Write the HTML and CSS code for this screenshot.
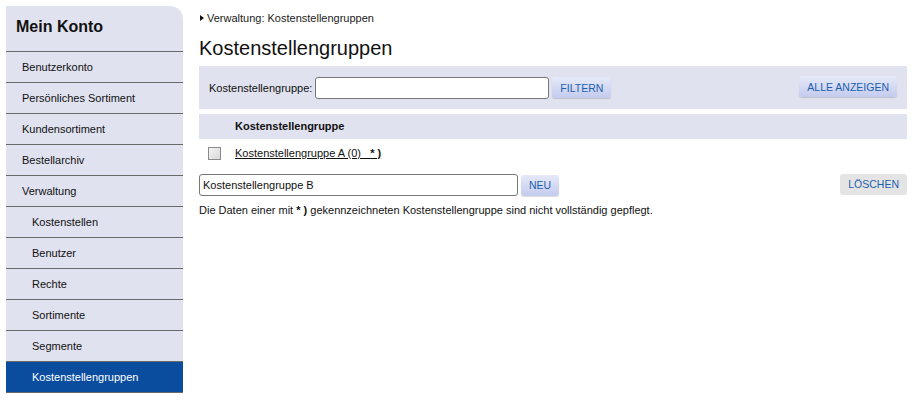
FILE: index.html
```html
<!DOCTYPE html>
<html>
	<head>
		<title>Kostenstellengruppen</title>
		<meta charset="utf-8" />
		<link rel="stylesheet" href="styles.css">
	</head>
	<body>
		<div class="page">
			<div class="sidebar">
				<h2>Mein Konto</h2>
				<a class="nav" href="#">Benutzerkonto</a>
				<a class="nav" href="#">Persönliches Sortiment</a>
				<a class="nav" href="#">Kundensortiment</a>
				<a class="nav" href="#">Bestellarchiv</a>
				<a class="nav" href="#">Verwaltung</a>
				<a class="nav sub" href="#">Kostenstellen</a>
				<a class="nav sub" href="#">Benutzer</a>
				<a class="nav sub" href="#">Rechte</a>
				<a class="nav sub" href="#">Sortimente</a>
				<a class="nav sub" href="#">Segmente</a>
				<a class="nav sub active" href="#">Kostenstellengruppen</a>
			</div>

			<div class="main">
				<div class="breadcrumb"><span class="arrow"></span>Verwaltung: Kostenstellengruppen</div>
				<h1>Kostenstellengruppen</h1>

				<div class="filter">
					<label for="filter_name">Kostenstellengruppe:</label>
					<input type="text" id="filter_name" class="filter-input" />
					<button class="btn">FILTERN</button>
					<button class="btn right">ALLE ANZEIGEN</button>
				</div>

				<div class="table-head">Kostenstellengruppe</div>
				<div class="row">
					<span class="check"></span>
					<a class="item-link" href="#">Kostenstellengruppe A (0) &nbsp; <b>* )</b></a>
				</div>

				<div class="new-row">
					<input type="text" class="new-input" value="Kostenstellengruppe B" />
					<button class="btn">NEU</button>
					<button class="btn gray right">LÖSCHEN</button>
				</div>
				<p class="note">Die Daten einer mit <b>* )</b> gekennzeichneten Kostenstellengruppe sind nicht vollständig gepflegt.</p>
			</div>
		</div>
	</body>
</html>
```

FILE: styles.css
```css
body {
	font-family: "Liberation Sans", Arial, sans-serif;
	font-size: 11px;
	color: #111;
	margin: 0;
	padding: 6px;
	background-color: #fff;
}
.page {
	display: flex;
	gap: 16px;
}
.sidebar {
	width: 177px;
	flex-shrink: 0;
	background-color: #e0e2ef;
	border-top-right-radius: 13px;
	display: flex;
	flex-direction: column;
}
.sidebar h2 {
	margin: 0;
	height: 45px;
	line-height: 42px;
	padding-left: 10px;
	font-size: 16px;
	font-weight: bold;
	border-bottom: 1px solid #6a6a6a;
}
.nav {
	display: block;
	height: 30px;
	line-height: 30px;
	padding-left: 16px;
	color: #111;
	text-decoration: none;
	border-bottom: 1px solid #6a6a6a;
}
.nav.sub {
	padding-left: 26px;
}
.nav.active {
	background-color: #0a4d9f;
	color: #fff;
}
.main {
	flex: 1;
}
.breadcrumb {
	margin-top: 5px;
	height: 14px;
	line-height: 14px;
	display: flex;
	align-items: center;
	color: #222;
}
.arrow {
	width: 0;
	height: 0;
	border-top: 3.5px solid transparent;
	border-bottom: 3.5px solid transparent;
	border-left: 4px solid #111;
	margin: 0 3px 0 1px;
}
h1 {
	font-size: 20px;
	font-weight: normal;
	margin: 12px 0 7px;
	line-height: 22px;
	color: #111;
}
.filter {
	background-color: #e0e2ef;
	height: 43px;
	display: flex;
	align-items: center;
	padding: 0 10px;
}
.filter label {
	margin-right: 3px;
}
.filter-input,
.new-input {
	height: 22px;
	box-sizing: border-box;
	border: 1px solid #777;
	border-radius: 3px;
	font-family: inherit;
	font-size: 11px;
	padding: 2px 3px;
	color: #111;
}
.filter-input {
	width: 234px;
	margin-right: 3px;
}
.btn {
	font-family: inherit;
	font-size: 10.5px;
	color: #1c5fae;
	height: 21px;
	padding: 0 8px;
	border: none;
	border-radius: 3px;
	background: linear-gradient(#e6e9f8, #c3cbee);
	box-shadow: 0 1px 1px rgba(0, 0, 0, 0.15);
	cursor: pointer;
}
.btn.right {
	margin-left: auto;
}
.btn.gray {
	background: #e4e4e4;
	box-shadow: none;
	margin-top: -2px;
}
.filter .btn.right {
	margin-top: -2px;
}
.table-head {
	margin-top: 5px;
	background-color: #e0e2ef;
	height: 25px;
	line-height: 25px;
	padding-left: 36px;
	font-weight: bold;
}
.row {
	height: 28px;
	display: flex;
	align-items: center;
}
.check {
	width: 11px;
	height: 11px;
	border: 1px solid #8a8a8a;
	background: linear-gradient(135deg, #f4f4f4, #d8d8d8);
	margin: 0 14px 0 9px;
}
.item-link {
	color: #111;
	text-decoration: underline;
}
.new-row {
	margin-top: 7px;
	display: flex;
	align-items: center;
}
.new-input {
	width: 319px;
	margin-right: 3px;
}
.note {
	margin: 8px 0 0;
}
```
